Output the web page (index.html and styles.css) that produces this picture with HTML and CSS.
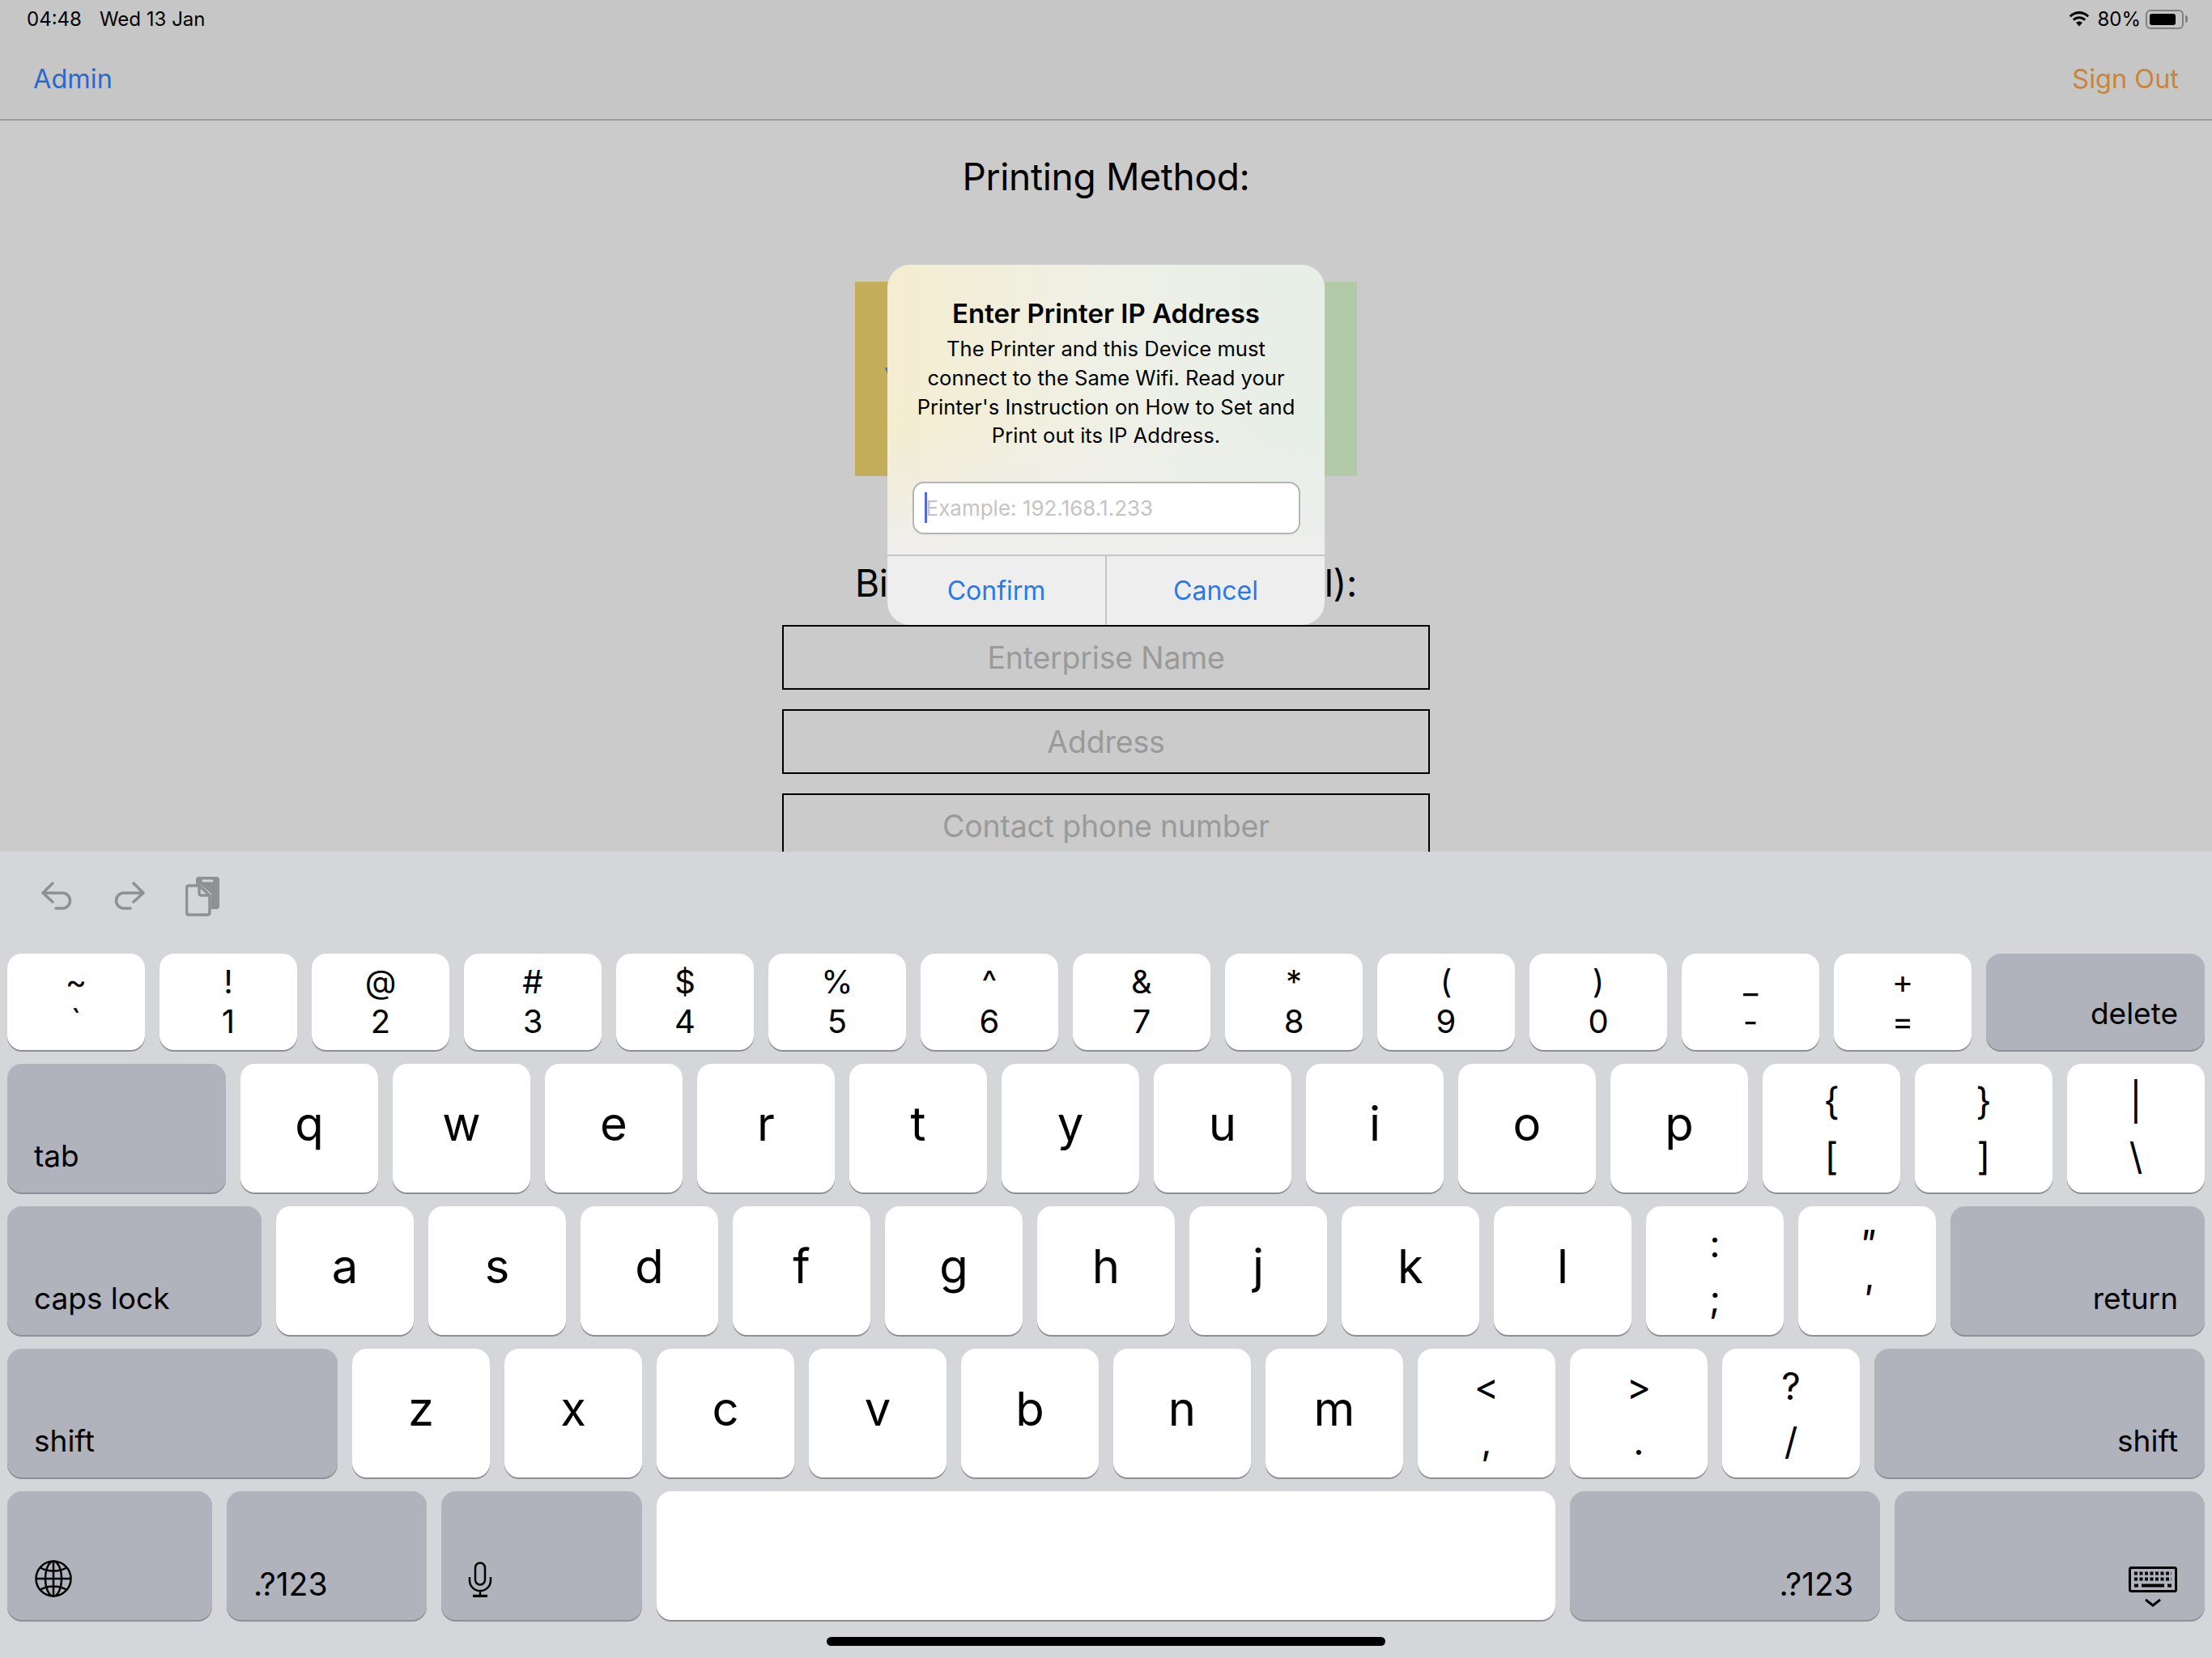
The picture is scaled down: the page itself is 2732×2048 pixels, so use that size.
FILE: index.html
```html
<!DOCTYPE html>
<html lang="en">
<head>
<meta charset="utf-8">
<title>Printing Method</title>
<link rel="stylesheet" href="styles.css">
</head>
<body>
<div class="screen">
  <header class="topbar">
    <div class="status">
      <div class="status-left"><span>04:48</span><span>Wed 13 Jan</span></div>
      <div class="status-right">
        <svg class="wifi" viewBox="0 0 28 20"><path d="M14 3.2c4 0 7.600 1.600 10.300 4.100l1.900-2.100C22.900 2 18.700 0 14 0S5.100 2 1.800 5.200l1.900 2.100C6.400 4.800 10 3.200 14 3.200z"/><path d="M14 9.300c2.400 0 4.600.9 6.200 2.400l2-2.200C20 7.400 17.100 6.200 14 6.200s-6 1.200-8.200 3.300l2 2.200c1.600-1.500 3.800-2.400 6.200-2.400z"/><path d="M14 12.400c-1.500 0-2.900.6-3.900 1.500l3.900 4.500 3.900-4.500c-1-.9-2.400-1.500-3.900-1.500z"/></svg>
        <span>80%</span>
        <div class="battery"><div class="battery-fill"></div></div>
        <div class="battery-nub"></div>
      </div>
    </div>
    <nav class="navbar">
      <span class="nav-admin">Admin</span>
      <span class="nav-signout">Sign Out</span>
    </nav>
  </header>
  <main class="content">
    <h1 class="title">Printing Method:</h1>
    <div class="methods">
      <div class="method method-yellow"><div class="method-mark"></div></div>
      <div class="method method-green"></div>
    </div>
    <h2 class="title billing"><span>Bi</span><span>l):</span></h2>
    <div class="field">Enterprise Name</div>
    <div class="field">Address</div>
    <div class="field">Contact phone number</div>
  </main>
  <section class="alert">
    <div class="alert-body">
      <h3 class="alert-title">Enter Printer IP Address</h3>
      <p class="alert-text">The Printer and this Device must<br>connect to the Same Wifi. Read your<br>Printer's Instruction on How to Set and<br>Print out its IP Address.</p>
      <div class="alert-input"><span class="caret"></span><span class="placeholder">Example: 192.168.1.233</span></div>
    </div>
    <div class="alert-actions">
      <div class="alert-btn">Confirm</div>
      <div class="alert-btn">Cancel</div>
    </div>
  </section>
</div>
<section class="keyboard">
  <div class="toolbar">
    <svg class="tool undo" viewBox="0 0 38 38"><path d="M14 2 2 14l12 11M2 14h24c5.500 0 9.500 4 9.500 9.500S31 33 26 33h-8"/></svg>
    <svg class="tool redo" viewBox="0 0 38 38"><path d="M24 2l12 12-12 11M36 14H12c-5.500 0-9.500 4-9.500 9.500S7 33 12 33h8"/></svg>
    <svg class="paste" viewBox="0 0 42 50"><path class="paste-back" d="M13 3.500C13 1.500 14.500 0 16.500 0h22C40.500 0 42 1.500 42 3.500v33c0 2-1.500 3.500-3.500 3.500H32V21L19 10h-6z"/><path class="paste-clip" d="M22 5h11"/><path class="paste-front" d="M4.500 11h12.500v9c0 2 1 3 3 3h10v20.500c0 2-1 3.500-3 3.500H4.500c-2 0-3-1.500-3-3.500V14c0-2 1-3 3-3zM17 11l13 12"/></svg>
  </div>
  <div class="rows">
    <div class="row row-num">
      <div class="key pair"><span>~</span><span>`</span></div>
      <div class="key pair"><span>!</span><span>1</span></div>
      <div class="key pair"><span>@</span><span>2</span></div>
      <div class="key pair"><span>#</span><span>3</span></div>
      <div class="key pair"><span>$</span><span>4</span></div>
      <div class="key pair"><span>%</span><span>5</span></div>
      <div class="key pair"><span>^</span><span>6</span></div>
      <div class="key pair"><span>&amp;</span><span>7</span></div>
      <div class="key pair"><span>*</span><span>8</span></div>
      <div class="key pair"><span>(</span><span>9</span></div>
      <div class="key pair"><span>)</span><span>0</span></div>
      <div class="key pair"><span>_</span><span>-</span></div>
      <div class="key pair"><span>+</span><span>=</span></div>
      <div class="key func right w-delete">delete</div>
    </div>
    <div class="row">
      <div class="key func left w-tab">tab</div>
      <div class="key letter">q</div>
      <div class="key letter">w</div>
      <div class="key letter">e</div>
      <div class="key letter">r</div>
      <div class="key letter">t</div>
      <div class="key letter">y</div>
      <div class="key letter">u</div>
      <div class="key letter">i</div>
      <div class="key letter">o</div>
      <div class="key letter">p</div>
      <div class="key pair"><span>{</span><span>[</span></div>
      <div class="key pair"><span>}</span><span>]</span></div>
      <div class="key pair"><span>|</span><span>\</span></div>
    </div>
    <div class="row">
      <div class="key func left w-caps">caps lock</div>
      <div class="key letter">a</div>
      <div class="key letter">s</div>
      <div class="key letter">d</div>
      <div class="key letter">f</div>
      <div class="key letter">g</div>
      <div class="key letter">h</div>
      <div class="key letter">j</div>
      <div class="key letter">k</div>
      <div class="key letter">l</div>
      <div class="key pair"><span>:</span><span>;</span></div>
      <div class="key pair slant"><span>"</span><span>'</span></div>
      <div class="key func right w-return">return</div>
    </div>
    <div class="row">
      <div class="key func left w-lshift">shift</div>
      <div class="key letter">z</div>
      <div class="key letter">x</div>
      <div class="key letter">c</div>
      <div class="key letter">v</div>
      <div class="key letter">b</div>
      <div class="key letter">n</div>
      <div class="key letter">m</div>
      <div class="key pair"><span>&lt;</span><span>,</span></div>
      <div class="key pair"><span>&gt;</span><span>.</span></div>
      <div class="key pair"><span>?</span><span>/</span></div>
      <div class="key func right w-rshift">shift</div>
    </div>
    <div class="row">
      <div class="key func left w-globe">
        <svg class="icon globe" viewBox="0 0 46 46"><circle cx="23" cy="23" r="21.500"/><ellipse cx="23" cy="23" rx="10" ry="21.500"/><path d="M23 1.500v43M1.500 23h43M6 9c10 6 24 6 34 0M6 37c10-6 24-6 34 0"/></svg>
      </div>
      <div class="key func left numkey w-num">.?123</div>
      <div class="key func left w-mic">
        <svg class="icon mic" viewBox="0 0 30 44"><rect x="9" y="1.500" width="12" height="27" rx="6"/><path d="M2 19v4c0 7.500 6 13 13 13s13-5.500 13-13v-4M15 36v6"/><path class="mic-base" d="M6 42.500h18"/></svg>
      </div>
      <div class="key w-space"></div>
      <div class="key func right numkey w-num2">.?123</div>
      <div class="key func w-hide">
        <svg class="kbd" viewBox="0 0 60 50"><rect x="1.500" y="1.500" width="57" height="29" rx="2"/><path class="kbd-dots" d="M7 8.500h46M7 15.500h46"/><path class="kbd-bar" d="M7 23.500h5M16 23.500h28M48 23.500h5"/><path d="M21 41l9 7 9-7"/></svg>
      </div>
    </div>
  </div>
  <div class="home-indicator"></div>
</section>
</body>
</html>
```
FILE: styles.css
```css
* { box-sizing: border-box; margin: 0; padding: 0; }
html, body { width: 2732px; height: 2048px; overflow: hidden; }
body { font-family: Inter, "Liberation Sans", sans-serif; color: #000; background: #d4d6da; }

.screen { position: relative; height: 1052px; overflow: hidden; background: #cbcbcb; }

.topbar { height: 149px; background: #c6c6c6; border-bottom: 2px solid #9c9c9c; }
.status { height: 47px; padding: 0 30px 0 33px; display: flex; justify-content: space-between; align-items: center; font-size: 24px; }
.status-left { display: flex; gap: 22px; }
.status-right { display: flex; align-items: center; font-size: 24px; }
.wifi { width: 28px; height: 20px; margin-right: 8px; fill: #000; }
.battery { width: 47px; height: 24px; margin-left: 6px; padding: 3px; border: 2px solid #808080; border-radius: 6px; }
.battery-fill { width: 32px; height: 100%; background: #000; border-radius: 3px; }
.battery-nub { width: 3px; height: 9px; margin-left: 2px; background: #808080; border-radius: 0 3px 3px 0; }
.navbar { display: flex; justify-content: space-between; align-items: center; height: 101px; padding: 0 41px; font-size: 32.500px; }
.nav-admin { color: #2b69c9; }
.nav-signout { color: #c8843a; }

.content { display: flex; flex-direction: column; align-items: center; }
.title { font-size: 46px; font-weight: 400; line-height: 60px; letter-spacing: -0.3px; }
.content > .title:first-child { margin-top: 39px; }
.methods { display: flex; width: 620px; height: 240px; margin-top: 100px; }
.method { flex: 1; }
.method-yellow { background: #c4ad58; padding: 106px 0 0 37px; }
.method-green { background: #b2caa8; }
.method-mark { width: 3px; height: 8px; background: #4a6cc0; clip-path: polygon(0 0, 100% 0, 100% 100%); }
.billing { display: flex; justify-content: space-between; width: 620px; margin-top: 102px; margin-bottom: 22px; }
.field { width: 800px; height: 80px; flex: none; margin-bottom: 24px; border: 2px solid #000; display: flex; align-items: center; justify-content: center; font-size: 37.500px; letter-spacing: -0.2px; color: #9a9a9a; }

.alert { position: absolute; left: 1096px; top: 327px; width: 540px; height: 445px; border-radius: 28px; overflow: hidden; display: flex; flex-direction: column; background: linear-gradient(to bottom, rgba(238,238,238,0) 45%, #eeeeee 82%), linear-gradient(to right, #f4edd0, #eff0e6 50%, #e6efe7); }
.alert-body { height: 358px; padding-top: 38px; display: flex; flex-direction: column; align-items: center; }
.alert-title { font-size: 33px; font-weight: 600; line-height: 44px; }
.alert-text { margin-top: 4px; font-size: 25.600px; line-height: 35.800px; text-align: center; }
.alert-input { position: relative; width: 479px; height: 65px; margin-top: 39px; display: flex; align-items: center; padding-left: 15px; background: #fff; border: 2px solid #b4b4b4; border-radius: 14px; font-size: 26px; color: #c4c4c4; }
.caret { position: absolute; left: 13px; top: 11px; width: 3px; height: 38px; background: #5468e0; }
.alert-actions { flex: 1; display: flex; border-top: 2px solid #c6c6c6; }
.alert-btn { flex: 1; display: flex; align-items: center; justify-content: center; font-size: 32px; color: #2a78ea; }
.alert-btn + .alert-btn { border-left: 2px solid #c6c6c6; }

.keyboard { height: 996px; background: #d4d6da; display: flex; flex-direction: column; }
.toolbar { height: 126px; padding: 37px 0 0 51px; display: flex; align-items: flex-start; }
.tool { width: 38px; height: 38px; fill: none; stroke: #8e9094; stroke-width: 3.500; stroke-linecap: round; stroke-linejoin: round; }
.redo { margin-left: 52px; }
.paste { width: 42px; height: 50px; margin: -6px 0 0 50px; }
.paste-back { fill: #8e9094; }
.paste-clip { stroke: #d4d6da; stroke-width: 3; stroke-linecap: round; }
.paste-front { fill: none; stroke: #8e9094; stroke-width: 3.500; stroke-linejoin: round; }

.rows { display: flex; flex-direction: column; gap: 17px; padding-left: 9px; }
.row { display: flex; gap: 18px; height: 159px; }
.row-num { height: 119px; }
.key { width: 170px; flex: none; border-radius: 18px; background: #fff; box-shadow: 0 2px 0 #8e8f93; display: flex; }
.letter { align-items: center; justify-content: center; padding-bottom: 12px; font-size: 58px; }
.pair { flex-direction: column; align-items: center; justify-content: center; font-size: 46px; line-height: 68px; }
.row-num .pair { font-size: 40px; line-height: 49px; padding-bottom: 2px; }
.slant span { font-style: italic; }
.func { background: #b0b3bc; font-size: 37px; line-height: 46px; align-items: flex-end; padding-bottom: 22px; }
.func.left { padding-left: 33px; }
.func.right { justify-content: flex-end; padding-right: 33px; }
.numkey { font-size: 39px; padding-bottom: 21px; }
.w-delete { width: 270px; }
.w-tab { width: 270px; }
.w-caps { width: 314px; }
.w-return { width: 314px; }
.w-lshift { width: 408px; }
.w-rshift { width: 408px; }
.w-globe { width: 253px; }
.w-num { width: 247px; }
.w-mic { width: 248px; }
.w-space { width: 1110px; }
.w-num2 { width: 383px; }
.w-hide { width: 383px; position: relative; }
.icon { fill: none; stroke: #000; stroke-width: 2.500; }
.globe { width: 46px; height: 46px; margin: 0 0 6px 1px; }
.mic { width: 30px; height: 44px; margin-bottom: 6px; }
.mic-base { stroke-width: 3.500; }
.kbd { position: absolute; left: 289px; top: 93px; width: 60px; height: 50px; fill: none; stroke: #000; stroke-width: 3; }
.kbd-dots { stroke-width: 4; stroke-dasharray: 4 2.500; }
.kbd-bar { stroke-width: 4; }

.home-indicator { width: 690px; height: 11px; margin: 21px auto 0; background: #000; border-radius: 5.500px; }
```
